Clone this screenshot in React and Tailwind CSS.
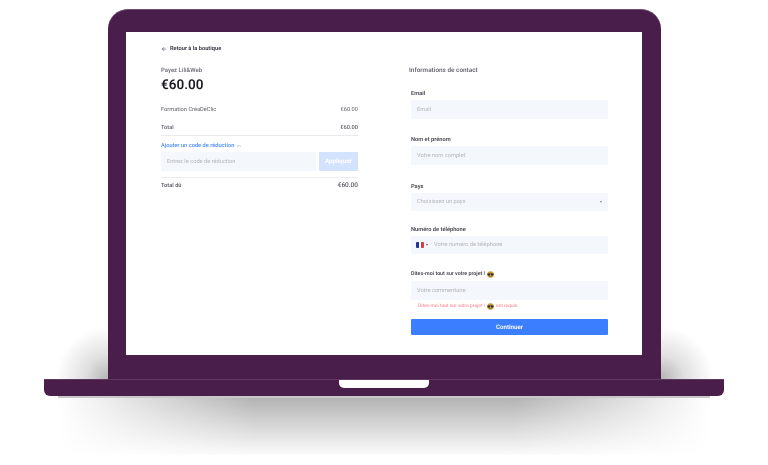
import { ArrowLeft, ChevronUp } from "lucide-react";

const CoolFace = () => (
  <svg viewBox="0 0 16 16" className="w-[7px] h-[7px] inline-block shrink-0 mt-[-1px]">
    <circle cx="8" cy="8" r="7.5" fill="#c99a3c" />
    <path d="M1 5.5h14v2l-1 2.5h-4l-1.5-3h-1L6 10H2L1 7.5z" fill="#2b2b2b" />
    <path d="M5 12c2 1.2 4 1.2 6 0" stroke="#5a3a10" strokeWidth="1" fill="none" />
  </svg>
);

const Field = ({ label, placeholder, className = "" }) => (
  <div className={className}>
    <div className="text-[5.7px] leading-[8px] font-semibold text-[#44454f] mb-[2px] pt-[2px]">{label}</div>
    <div className="h-[19px] rounded-[1px] bg-[#f4f7fb] px-[6px] pt-[1px] flex items-center text-[5.7px] text-[#b4b7bd]">
      {placeholder}
    </div>
  </div>
);

const Row = ({ left, right, className = "" }) => (
  <div className={`flex justify-between items-center text-[5.7px] leading-[8px] text-[#63646c] ${className}`}>
    <span>{left}</span>
    <span>{right}</span>
  </div>
);

const Summary = () => (
  <div className="w-[197px] shrink-0">
    <div className="flex items-center gap-[1px] h-[8px] mt-[13px] text-[5.7px] font-semibold text-[#30313d]">
      <ArrowLeft className="w-[6px] h-[6px] mr-[2px]" strokeWidth={2} />
      Retour à la boutique
    </div>
    <div className="mt-[14px] text-[6px] leading-[8px] font-medium text-[#6a6b73]">Payez Lili&amp;Web</div>
    <div className="text-[13.5px] leading-[18px] font-semibold text-[#1a1a22] pt-[1px]">€60.00</div>
    <Row className="mt-[12px]" left="Formation CréaDéClic" right="€60.00" />
    <Row className="mt-[10px] font-medium" left="Total" right="€60.00" />
    <div className="mt-[3px] border-t border-[#e8eaed]" />
    <div className="mt-[6px] flex items-center gap-[2px] h-[8px] text-[5.7px] font-medium text-[#4a8df8]">
      Ajouter un code de réduction
      <ChevronUp className="w-[6px] h-[6px]" strokeWidth={2} />
    </div>
    <div className="mt-[2px] flex gap-[3px] h-[19px]">
      <div className="flex-1 rounded-[1px] bg-[#f4f7fb] px-[6px] pt-[1px] flex items-center text-[5.7px] text-[#b4b7bd]">
        Entrez le code de réduction
      </div>
      <div className="w-[39px] rounded-[1px] bg-[#d3e3fd] flex items-center justify-center text-[6.3px] font-semibold text-white">
        Appliquer
      </div>
    </div>
    <div className="mt-[6px] border-t border-[#eceef0]" />
    <div className="mt-[3px] flex justify-between items-center h-[10px] text-[#55565f]">
      <span className="text-[5.7px] font-medium">Total dû</span>
      <span className="text-[6.5px] font-medium">€60.00</span>
    </div>
  </div>
);

const ContactForm = () => (
  <div className="w-[199px] shrink-0 ml-[51px]">
    <div className="mt-[34px] h-[8px] leading-[8px] text-[6.4px] font-semibold text-[#6a6b73]">
      Informations de contact
    </div>
    <div className="ml-[2px] w-[197px]">
      <Field className="mt-[14px]" label="Email" placeholder="Email" />
      <Field className="mt-[15px]" label="Nom et prénom" placeholder="Votre nom complet" />
      <div className="mt-[16px]">
        <div className="text-[5.7px] leading-[8px] font-semibold text-[#44454f] mb-[2px] pt-[2px]">Pays</div>
        <div className="h-[18px] rounded-[1px] bg-[#f4f7fb] px-[6px] flex items-center justify-between text-[5.7px] text-[#b4b7bd]">
          Choisissez un pays
          <span className="w-0 h-0 border-x-[1.5px] border-x-transparent border-t-[2px] border-t-[#888]" />
        </div>
      </div>
      <div className="mt-[13px]">
        <div className="text-[5.7px] leading-[8px] font-semibold text-[#44454f] mb-[2px] pt-[2px]">Numéro de téléphone</div>
        <div className="h-[18px] rounded-[1px] bg-[#f4f7fb] pl-[5px] flex items-center text-[5.7px] text-[#b4b7bd]">
          <span className="flex w-[8px] h-[6px] overflow-hidden rounded-[1px]">
            <span className="flex-1 bg-[#1f3a93]" />
            <span className="flex-1 bg-white" />
            <span className="flex-1 bg-[#e53945]" />
          </span>
          <span className="ml-[2px] w-0 h-0 border-x-[1.5px] border-x-transparent border-t-[2px] border-t-[#666]" />
          <span className="ml-[6px]">Votre numéro de téléphone</span>
        </div>
      </div>
      <div className="mt-[16px] flex items-center gap-[2px] h-[8px] text-[5.3px] font-semibold text-[#44454f] pt-[1px]">
        Dites-moi tout sur votre projet ! <CoolFace />
      </div>
      <div className="mt-[3px] h-[19px] rounded-[1px] bg-[#f4f7fb] px-[6px] pt-[1px] flex items-center text-[5.7px] text-[#b4b7bd]">
        Votre commentaire
      </div>
      <div className="mt-[3px] pl-[7px] flex items-center gap-[2px] h-[8px] text-[4.9px] text-[#f77b84]">
        Dites-moi tout sur votre projet ! <CoolFace /> est requis
      </div>
      <div className="mt-[8px] h-[16px] rounded-[1px] bg-[#3b7eff] flex items-center justify-center text-[6.2px] font-semibold text-white pt-[1px]">
        Continuer
      </div>
    </div>
  </div>
);

export default function App() {
  return (
    <div className="relative w-[768px] h-[465px] overflow-hidden bg-white font-['Roboto',sans-serif] [text-rendering:geometricPrecision]">
      {/* shadows behind the laptop */}
      <div className="absolute left-[58px] top-[396px] w-[652px] h-[59px] bg-[linear-gradient(to_bottom,#b0b0b0_0%,#cfcfcf_40%,#f0f0f0_85%,#fbfbfb_100%)] [mask-image:linear-gradient(to_right,transparent_0%,#000_30%,#000_70%,transparent_100%)]" />
      <div className="absolute left-[52px] top-[325px] w-[56px] h-[54px] bg-[radial-gradient(circle_52px_at_100%_100%,#b4b4b4_0%,#e0e0e0_45%,#ffffff_100%)]" />
      <div className="absolute left-[661px] top-[325px] w-[56px] h-[54px] bg-[radial-gradient(circle_52px_at_0%_100%,#b4b4b4_0%,#e0e0e0_45%,#ffffff_100%)]" />

      <div className="relative flex flex-col items-center pt-[9px]">
        {/* lid */}
        <div className="w-[553px] h-[370px] ml-[1px] rounded-t-[20px] bg-[#4a1e4b] border-t border-[#6f4f70] pt-[22px] pl-[18px]">
          <div className="w-[516px] h-[323px] bg-white">
            <div className="flex pl-[35px] blur-[0.35px]">
              <Summary />
              <ContactForm />
            </div>
          </div>
        </div>
        {/* base */}
        <div className="w-[680px] h-[17px] rounded-b-[6px] bg-[#4a1e4b] border-t border-[#5f3a60] flex justify-center">
          <div className="w-[90px] h-[8px] rounded-b-[5px] bg-white" />
        </div>
        <div className="w-[652px] h-[2px] bg-[#c9c7c9]" />
      </div>
    </div>
  );
}
